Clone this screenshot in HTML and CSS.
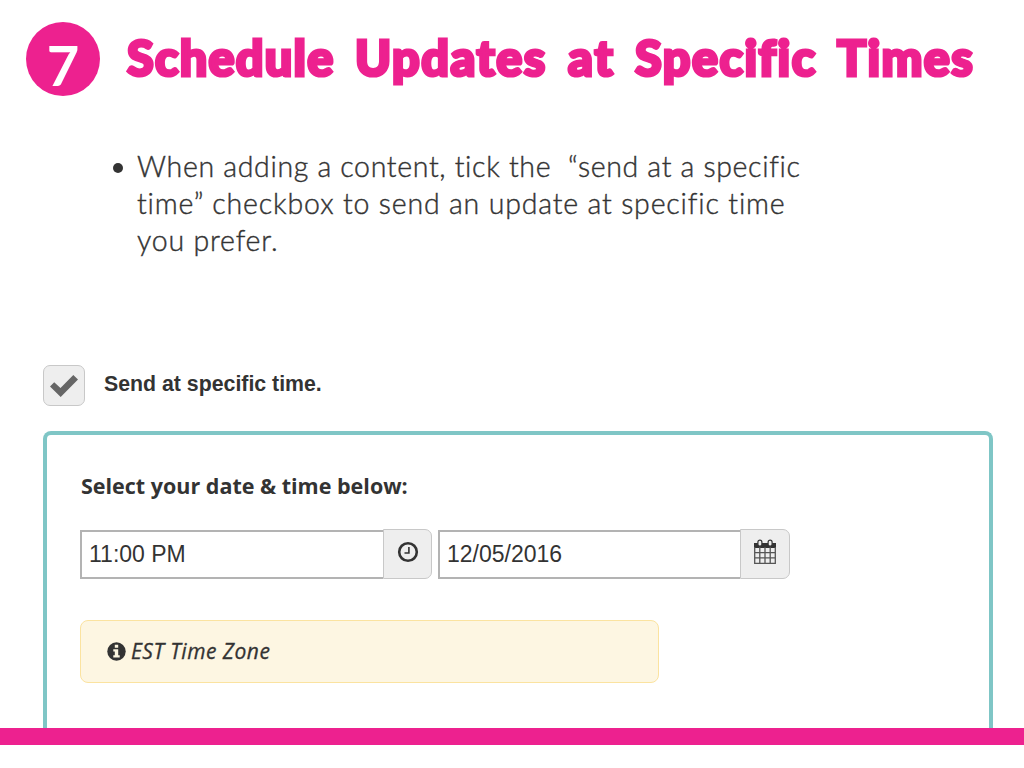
FILE: index.html
```html
<!DOCTYPE html>
<html lang="en">
<head>
  <meta charset="UTF-8">
  <title>Schedule Updates at Specific Times</title>
  <link rel="stylesheet" href="styles.css">
</head>
<body>

  <header class="slide-header">
    <div class="step-number">7</div>
    <h1 class="slide-title">
      <span class="w-schedule">Schedule</span>
      <span class="w-updates">Updates</span>
      <span class="w-at">at</span>
      <span class="w-specific">Specific</span>
      <span class="w-times">Times</span>
    </h1>
  </header>

  <ul class="steps">
    <li>
      <span class="line line-1">When adding a content, tick the&nbsp; “send at a specific</span><br>
      <span class="line line-2">time” checkbox to send an update at specific time</span><br>
      <span class="line line-3">you prefer.</span>
    </li>
  </ul>

  <div class="check-row">
    <span class="checkbox">
      <svg width="30" height="24" viewBox="0 0 30 24"><path d="M1 12.5 5.2 8.2 11.5 14 24.3 1 29 5.6 11.7 23Z" fill="#666"/></svg>
    </span>
    <span class="check-label">Send at specific time.</span>
  </div>

  <section class="panel">
    <p class="panel-title">Select your date &amp; time below:</p>

    <div class="fields">
      <div class="input-group time">
        <div class="input">11:00 PM</div>
        <div class="addon">
          <svg width="22" height="22" viewBox="0 0 22 22" fill="none" stroke="#333"><circle cx="11" cy="11" r="8.8" stroke-width="2.6"/><path d="M11.9 6v6H7.5" stroke-width="1.6"/></svg>
        </div>
      </div>
      <div class="input-group date">
        <div class="input">12/05/2016</div>
        <div class="addon">
          <svg width="24" height="26" viewBox="0 0 24 26"><path d="M1 4h22v5H1z" fill="#333"/><path d="M1.700 8v16.300h20.600V8M1.700 13.700h20.600M1.700 18.900h20.600M6.800 8v16.300M12 8v16.300M17.200 8v16.300" fill="none" stroke="#555" stroke-width="1.300"/><rect x="4.900" y="1.200" width="4" height="6" rx="2" fill="#eee" stroke="#333" stroke-width="1.200"/><rect x="15.100" y="1.200" width="4" height="6" rx="2" fill="#eee" stroke="#333" stroke-width="1.200"/></svg>
        </div>
      </div>
    </div>

    <div class="notice">
      <svg width="19" height="19" viewBox="0 0 19 19"><circle cx="9.5" cy="9.5" r="9.2" fill="#333"/><path d="M7.800 2.800h3.400v2.900H7.800zM6.300 7.200h4.900v6h1.500v2.300H6.300v-2.300h1.500V9.500H6.300z" fill="#fcf6e1"/></svg>
      <em>EST Time Zone</em>
    </div>
  </section>

  <footer class="bar"></footer>

</body>
</html>
```
FILE: styles.css
```css
* {
  box-sizing: border-box;
}

body {
  margin: 0;
  width: 1024px;
  height: 768px;
  overflow: hidden;
  display: flex;
  flex-direction: column;
  background: #fff;
  color: #333;
}

.slide-header {
  display: flex;
  align-items: flex-start;
  height: 140px;
  padding: 22px 0 0 26px;
}

.step-number {
  flex: none;
  width: 74px;
  height: 74px;
  border-radius: 50%;
  background: #ed218f;
  color: #fff;
  font: bold 56px/85px Lato, sans-serif;
  text-align: center;
}

.slide-title {
  display: flex;
  margin: 0 0 0 27px;
  color: #ed218f;
  font: 900 48.5px/70px Lato, sans-serif;
  -webkit-text-stroke: 3.2px #ed218f;
}

.w-schedule {
  width: 228px;
  letter-spacing: 1.3px;
}

.w-updates {
  width: 213px;
  letter-spacing: 1.6px;
}

.w-at {
  width: 67px;
  letter-spacing: 2px;
}

.w-specific {
  width: 202px;
  letter-spacing: 1.5px;
}

.w-times {
  letter-spacing: 1.4px;
}

.steps {
  height: 225px;
  margin: 0;
  padding: 8px 0 0 137px;
  list-style: none;
  font: 300 28.5px/37px Lato, sans-serif;
  -webkit-text-stroke: 0.4px #333;
}

.steps li {
  position: relative;
  white-space: nowrap;
}

.steps li::before {
  content: "";
  position: absolute;
  left: -24px;
  top: 15px;
  width: 10px;
  height: 10px;
  border-radius: 50%;
  background: #333;
}

.line-1 {
  letter-spacing: 0.67px;
}

.line-2 {
  letter-spacing: 0.83px;
}

.line-3 {
  letter-spacing: 0.8px;
}

.check-row {
  display: flex;
  height: 66px;
  padding-left: 43px;
}

.checkbox {
  display: flex;
  align-items: center;
  justify-content: center;
  width: 42px;
  height: 41px;
  margin-right: 19px;
  border: 1px solid #c8c8c8;
  border-radius: 7px;
  background: #eee;
}

.check-label {
  font: bold 21.3px/38px "Liberation Sans", Arial, sans-serif;
}

.panel {
  width: 950px;
  height: 297px;
  margin-left: 43px;
  padding: 36px 0 0 34px;
  border: 4px solid #7fc6c6;
  border-bottom: 0;
  border-radius: 8px 8px 0 0;
}

.panel-title {
  height: 58px;
  margin: 0;
  font: bold 21.5px/30px "Open Sans", sans-serif;
}

.fields {
  display: flex;
  gap: 6px;
  margin-left: -1px;
}

.input-group {
  display: flex;
  width: 352px;
  height: 50px;
}

.input {
  flex: 1;
  height: 49px;
  margin-top: 1px;
  padding-left: 7px;
  border: 2px solid #b3b3b3;
  border-right: 0;
  font: 23px/44px "Liberation Sans", Arial, sans-serif;
}

.addon {
  display: flex;
  align-items: center;
  justify-content: center;
  width: 49px;
  padding-bottom: 4px;
  border: 1px solid #c8c8c8;
  border-radius: 0 7px 7px 0;
  background: #eee;
}

.date .addon {
  width: 50px;
}

.notice {
  display: flex;
  align-items: center;
  gap: 5px;
  width: 579px;
  height: 63px;
  margin: 41px 0 0 -1px;
  padding-left: 26px;
  border: 1px solid #fbe3a0;
  border-radius: 8px;
  background: #fdf6e2;
  font: 500 21px/30px "Open Sans", sans-serif;
}

.notice em {
  margin-top: -1px;
  letter-spacing: 0.5px;
  -webkit-text-stroke: 0.3px #333;
}

.bar {
  height: 17px;
  background: #ed218f;
}
```
